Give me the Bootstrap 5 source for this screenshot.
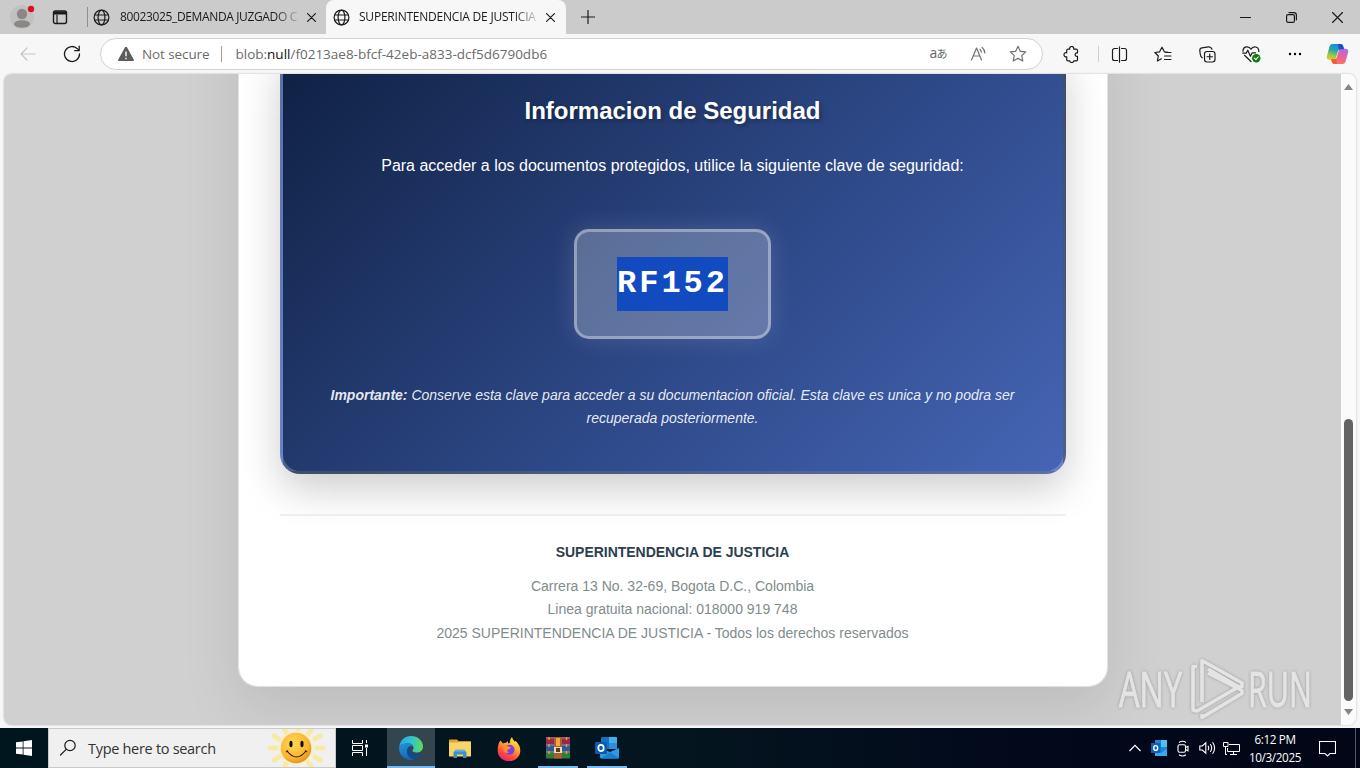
<!DOCTYPE html>
<html lang="es">
<head>
    <meta charset="UTF-8">
    <meta name="viewport" content="width=device-width, initial-scale=1.0">
    <title>SUPERINTENDENCIA DE JUSTICIA</title>
    <link href="https://cdn.jsdelivr.net/npm/bootstrap@5.3.1/dist/css/bootstrap.min.css" rel="stylesheet">
    <style>
        body {
            width: 1360px;
            height: 768px;
            background-color: #f7f7f7;
            font-family: "Open Sans", "Noto Sans CJK JP", sans-serif;
            color: #1b1b1b;
        }
        svg {
            display: block;
            flex: none;
        }
        .line-icon {
            fill: none;
            stroke: #1b1b1b;
            stroke-width: 1.2;
            stroke-linecap: round;
            stroke-linejoin: round;
        }
        .line-grey { stroke: #707070; }
        .line-off { stroke: #c6c6c6; }

        /* Tab strip */
        .tab-strip {
            height: 34px;
            background-color: #cbcbcb;
            font-size: 12px;
        }
        .cell-profile { width: 44px; }
        .cell-workspace { width: 32px; }
        .tab-divider {
            width: 1px;
            height: 20px;
            margin-left: 11px;
            background-color: #8f8f8f;
        }
        .browser-tab {
            height: 34px;
            padding-left: 5px;
        }
        .tab-first { width: 238px; }
        .tab-current {
            width: 240px;
            padding-left: 7px;
            background-color: #f7f7f7;
            border-radius: 8px 8px 0 0;
        }
        .tab-text {
            width: 180px;
            margin-left: 9px;
            letter-spacing: -.22px;
            -webkit-mask-image: linear-gradient(90deg, #000 155px, transparent 182px);
            mask-image: linear-gradient(90deg, #000 155px, transparent 182px);
        }
        .tab-first .tab-text { margin-left: 10px; letter-spacing: -.36px; }
        .tab-close { margin-left: 7px; }
        .cell-plus { width: 43px; }
        .cell-window { width: 46px; }

        /* Address bar */
        .toolbar { height: 40px; }
        .cell-back { width: 56px; }
        .cell-reload { width: 32px; margin-right: 12px; }
        .address {
            width: 943px;
            height: 32px;
            padding-left: 17px;
            background-color: #fff;
            border: 1px solid #d2d2d2;
            border-radius: 16px;
            font-size: 13.5px;
            color: #6b6b6b;
        }
        .not-secure { margin-left: 8px; letter-spacing: -.1px; }
        .address-divider {
            width: 1px;
            height: 16px;
            margin: 0 13px 0 12px;
            background-color: #9b9b9b;
        }
        .url-text { letter-spacing: 0; }
        .url-text b { font-weight: 400; color: #111; }
        .cell-address { width: 40px; }
        .cell-ext { width: 56px; }
        .toolbar-divider { width: 1px; height: 16px; background-color: #cfcfcf; margin: 0 -1px; }
        .cell-tool { width: 44px; }
        .tool-split { width: 42px; }
        .tool-fav { width: 45px; }
        .cell-copilot { width: 40px; }

        /* Page viewport */
        .page-frame {
            width: 1352px;
            height: 651px;
            margin-left: 4px;
            border-radius: 8px;
            overflow: hidden;
            box-shadow: 0 0 2px rgba(0, 0, 0, .3);
        }
        .page-view {
            width: 1337px;
            padding-bottom: 38px;
            background-color: #d0d0d0;
            overflow: hidden;
            font-family: "Liberation Sans", Arial, sans-serif;
        }
        .sheet {
            width: 870px;
            padding: 41px;
            background-color: #fff;
            background-clip: padding-box;
            border: 1px solid rgba(255, 255, 255, .5);
            border-radius: 20px;
            box-shadow: 0 20px 60px rgba(0, 0, 0, .1);
        }
        .security-box {
            height: 425px;
            padding: 40px;
            border: 3px solid rgba(255, 255, 255, .2);
            border-radius: 20px;
            background-image: linear-gradient(135deg, #0f2042 0%, #2a4480 50%, #4565b5 100%);
            box-shadow: 0 15px 40px rgba(0, 0, 0, .2);
            color: #fff;
        }
        .security-title {
            font-size: 24px;
            line-height: 38px;
            font-weight: 700;
            text-shadow: 2px 2px 4px rgba(0, 0, 0, .3);
        }
        .security-lead {
            margin: 22px 0 50px;
            font-size: 16px;
            line-height: 27px;
        }
        .key-box {
            width: 197px;
            height: 110px;
            padding-top: 25px;
            border: 3px solid rgba(255, 255, 255, .35);
            border-radius: 15px;
            background-color: rgba(255, 255, 255, .25);
            box-shadow: 0 0 25px rgba(255, 255, 255, .14);
        }
        .key-value {
            height: 54px;
            line-height: 54px;
            background-color: #124ac0;
            font-family: "Liberation Mono", "Courier New", monospace;
            font-size: 32px;
            font-weight: 700;
            letter-spacing: 3px;
        }
        .security-note {
            margin-top: 45px;
            font-size: 14px;
            line-height: 23px;
            color: rgba(255, 255, 255, .9);
        }
        .sheet-footer {
            margin-top: 40px;
            border-top: 2px solid #eeeeee;
            padding-top: 25px;
            color: #7f8c8d;
            font-size: 14px;
            line-height: 23.4px;
        }
        .footer-name {
            margin-bottom: 10px;
            color: #2c3e50;
            letter-spacing: -.03px;
        }

        /* Scrollbar */
        .scroll-track { width: 15px; background-color: #fbfbfb; padding: 10px 0; }
        .scroll-thumb {
            width: 9px;
            height: 282px;
            border-radius: 5px;
            background-color: #636363;
            margin-bottom: 8px;
        }

        /* Watermark over the page corner */
        .watermark {
            position: absolute;
            left: 1114px;
            top: 654px;
            filter: drop-shadow(0 0 1.5px rgba(0, 0, 0, .25));
        }

        /* Taskbar */
        .taskbar {
            height: 40px;
            margin-top: 3px;
            background: linear-gradient(90deg, #00161f 0%, #04151f 50%, #02091b 75%, #020617 100%);
            color: #fff;
        }
        .task-start { width: 48px; }
        .task-search {
            width: 288px;
            padding: 0 9px 0 10px;
            background-color: #f0f0f0;
            border: 1px solid #c9c9c9;
            color: #333;
            font-size: 14.5px;
        }
        .search-label { margin-left: 11px; padding-top: 1px; letter-spacing: -.3px; }
        .task-view { width: 51px; padding-right: 3px; }
        .task-app { width: 49px; height: 40px; padding-top: 2px; }
        .task-line { height: 2px; width: 40px; background-color: #76b9ed; }
        .task-active { width: 48px; background-color: #33454e; }
        .task-active .task-line { width: 48px; }
        .cell-tray { width: 24px; }
        .task-clock { width: 64px; font-size: 11.7px; line-height: 18px; letter-spacing: -.35px; }
        .cell-notice { width: 40px; }
        .show-desktop { width: 5px; height: 40px; border-left: 1px solid #54596a; }
    </style>
</head>
<body class="d-flex flex-column overflow-hidden position-relative">

<!-- Tabs -->
<div class="tab-strip d-flex align-items-center flex-shrink-0">
    <div class="cell-profile d-flex justify-content-center">
        <svg width="26" height="26" viewBox="0 0 26 26">
            <circle cx="13" cy="13" r="12" fill="#c3c1bf"/>
            <circle cx="13" cy="10" r="5.2" fill="#8b8784"/>
            <ellipse cx="13" cy="20" rx="8" ry="3.8" fill="#8b8784"/>
            <circle cx="22" cy="5" r="3.2" fill="#d8131f"/>
        </svg>
    </div>
    <div class="cell-workspace d-flex justify-content-center">
        <svg class="line-icon" width="16" height="16" viewBox="0 0 16 16">
            <rect x="1.5" y="2" width="13" height="12.5" rx="2" stroke-width="1.4"/>
            <path d="M2 3.500h12M2 4.500h12" stroke-width="1.800"/><path d="M5 6v8"/>
        </svg>
    </div>
    <div class="tab-divider"></div>
    <div class="browser-tab tab-first d-flex align-items-center">
        <svg class="line-icon" width="17" height="17" viewBox="0 0 17 17">
            <circle cx="8.5" cy="8.5" r="7.4"/><ellipse cx="8.5" cy="8.5" rx="3.4" ry="7.4"/><path d="M1.8 6h13.4M1.8 11h13.4"/>
        </svg>
        <span class="tab-text text-nowrap overflow-hidden">80023025_DEMANDA JUZGADO C</span>
        <svg class="line-icon tab-close" width="9" height="9" viewBox="0 0 9 9"><path d="M.6.6l7.8 7.8M8.4.6L.6 8.4"/></svg>
    </div>
    <div class="browser-tab tab-current d-flex align-items-center">
        <svg class="line-icon" width="17" height="17" viewBox="0 0 17 17">
            <circle cx="8.5" cy="8.5" r="7.4"/><ellipse cx="8.5" cy="8.5" rx="3.4" ry="7.4"/><path d="M1.8 6h13.4M1.8 11h13.4"/>
        </svg>
        <span class="tab-text text-nowrap overflow-hidden">SUPERINTENDENCIA DE JUSTICIA</span>
        <svg class="line-icon tab-close" width="9" height="9" viewBox="0 0 9 9"><path d="M.6.6l7.8 7.8M8.4.6L.6 8.4"/></svg>
    </div>
    <div class="cell-plus d-flex justify-content-center">
        <svg class="line-icon" width="14" height="14" viewBox="0 0 14 14"><path d="M7 .5v13M.5 7h13"/></svg>
    </div>
    <div class="d-flex ms-auto">
        <div class="cell-window d-flex justify-content-center align-items-center">
            <svg class="line-icon" width="11" height="11" viewBox="0 0 11 11"><path d="M.5 5.5h10"/></svg>
        </div>
        <div class="cell-window d-flex justify-content-center align-items-center">
            <svg class="line-icon" width="11" height="11" viewBox="0 0 11 11"><rect x=".6" y="2.6" width="7.8" height="7.8" rx="1.5"/><path d="M3 .6h4.8a2.6 2.6 0 0 1 2.6 2.6v4.6"/></svg>
        </div>
        <div class="cell-window d-flex justify-content-center align-items-center">
            <svg class="line-icon" width="11" height="11" viewBox="0 0 11 11"><path d="M.5.5l10 10M10.5.5l-10 10"/></svg>
        </div>
    </div>
</div>

<!-- Address bar -->
<div class="toolbar d-flex align-items-center flex-shrink-0">
    <div class="cell-back d-flex justify-content-center">
        <svg class="line-icon line-off" width="16" height="14" viewBox="0 0 16 14"><path d="M15 7H1M7 1L1 7l6 6"/></svg>
    </div>
    <div class="cell-reload d-flex justify-content-center">
        <svg class="line-icon" width="18" height="18" viewBox="0 0 18 18"><path d="M16.5 9A7.5 7.5 0 1 1 14.5 3.900L16.200 5.600M16.200 1.200v4.500h-4.500" stroke-width="1.300"/></svg>
    </div>
    <div class="address d-flex align-items-center">
        <svg width="16" height="16" viewBox="0 0 16 16"><path d="M7 1.300a1.150 1.150 0 0 1 2 0l6.800 12.400a.9.9 0 0 1-.8 1.300H1a.9.9 0 0 1-.8-1.300z" fill="#5c5c5c"/><path d="M8 5.500v4.700M8 11.800v1.400" stroke="#fff" stroke-width="1.400"/></svg>
        <span class="not-secure text-nowrap">Not secure</span>
        <div class="address-divider"></div>
        <span class="url-text text-nowrap">blob:<b>null</b>/f0213ae8-bfcf-42eb-a833-dcf5d6790db6</span>
        <div class="d-flex align-items-center ms-auto me-1">
            <div class="cell-address d-flex justify-content-center">
                <svg width="22" height="22" viewBox="0 0 22 22">
                    <text x="2.500" y="15" font-size="14" fill="#666">a</text>
                    <text x="9.500" y="15" font-size="11" fill="#666" font-family="Noto Sans CJK JP">あ</text>
                </svg>
            </div>
            <div class="cell-address d-flex justify-content-center">
                <svg class="line-icon line-grey" width="17" height="16" viewBox="0 0 17 16"><path d="M1.500 14L6.500 2l5 12M3.200 10h6.600M10 3.200q1.200 1.200 1.300 3M12.200 1.500q2.300 2 2.600 5.500"/></svg>
            </div>
            <div class="cell-address d-flex justify-content-center">
                <svg class="line-icon line-grey" width="18" height="18" viewBox="0 0 18 18"><path d="M9 1.300l2.300 5 5.400.6-4 3.700 1.100 5.400L9 13.400 4.200 16l1.100-5.400-4-3.700 5.400-.6z"/></svg>
            </div>
        </div>
    </div>
    <div class="cell-ext d-flex justify-content-center">
        <svg class="line-icon" width="17" height="17" viewBox="0 0 17 17"><path d="M5 3.200h1.700a2.100 2.100 0 1 1 4 0h2.500a1.300 1.300 0 0 1 1.300 1.300v2.300h-.6a1.800 1.800 0 1 0 0 3.600h.6v3.200a1.300 1.300 0 0 1-1.300 1.300h-2.400a2.100 2.100 0 0 1-4.100 0H5a1.300 1.300 0 0 1-1.300-1.300v-2.800a2.100 2.100 0 1 1 0-4V4.500A1.300 1.300 0 0 1 5 3.200z"/></svg>
    </div>
    <div class="toolbar-divider"></div>
    <div class="cell-tool tool-split d-flex justify-content-center">
        <svg class="line-icon" width="17" height="17" viewBox="0 0 17 17"><path d="M6.500 2.500h-3a2 2 0 0 0-2 2v8a2 2 0 0 0 2 2h3M8.500.8v15.400M10.500 2.500h3a2 2 0 0 1 2 2v8a2 2 0 0 1-2 2h-3"/></svg>
    </div>
    <div class="cell-tool tool-fav d-flex justify-content-center">
        <svg class="line-icon" width="18" height="17" viewBox="0 0 18 17"><path d="M14 6.300l-3.600-.5L8 1.200 5.600 5.800l-4.800.7 3.500 3.500-.9 5 4-2.200M11.500 6.500H17M10.500 10H17M10.500 13.500H17"/></svg>
    </div>
    <div class="cell-tool d-flex justify-content-center">
        <svg class="line-icon" width="17" height="17" viewBox="0 0 17 17"><rect x="5.500" y="5.500" width="10.500" height="10.500" rx="2.400"/><path d="M10.750 8v5.500M8 10.750h5.500M3.200 11.800C1.800 11 1.400 9.500 1.200 8L.8 4.500A2.500 2.500 0 0 1 3 1.800L9.500.9q2.600-.2 3.500 2.300"/></svg>
    </div>
    <div class="cell-tool d-flex justify-content-center">
        <svg class="line-icon" width="19" height="17" viewBox="0 0 19 17"><path d="M9 3.300C7-.2 1-.1 1 5.300M9 3.300c2-3.500 8-3.300 7.800 2.200M2.500 9.300L9 15.500M.8 7.200h3.400l1.600-3 2.600 6 1.800-3.400h3.300"/><circle cx="14.300" cy="12.200" r="4.200" fill="#0f7b0f" stroke="none"/><path d="M12.400 12.200l1.400 1.400 2.500-2.700" stroke="#fff" stroke-width="1.100"/></svg>
    </div>
    <div class="cell-tool d-flex justify-content-center">
        <svg width="14" height="4" viewBox="0 0 14 4"><circle cx="2" cy="2" r="1.200"/><circle cx="7" cy="2" r="1.200"/><circle cx="12" cy="2" r="1.200"/></svg>
    </div>
    <div class="cell-copilot d-flex justify-content-center">
        <svg width="23" height="22" viewBox="0 0 23 22">
            <defs>
                <linearGradient id="copA" x1="0.500" y1="0" x2="0.200" y2="1"><stop offset="0" stop-color="#1a8ce0"/><stop offset=".4" stop-color="#2aa8a8"/><stop offset=".75" stop-color="#9fce3d"/><stop offset="1" stop-color="#f3c022"/></linearGradient>
                <linearGradient id="copB" x1="0.700" y1="0" x2="0.300" y2="1"><stop offset="0" stop-color="#b06be8"/><stop offset=".45" stop-color="#e9609f"/><stop offset="1" stop-color="#fb7a4c"/></linearGradient>
            </defs>
            <path d="M6 1h8.500q2 0 2.600 2l1 3.200h-3.500q-2 0-2.600 2l-2 6.500q-.6 2-2.600 2H3.600q-3.500 0-2.700-3.500L3.300 4Q4 1 6 1z" fill="url(#copA)"/>
            <path d="M17 21H8.500q-2 0-2.600-2l-.7-2.800h3q2 0 2.600-2l2-6.500q.6-2 2.600-2h4q3.500 0 2.700 3.500L19.700 18q-.7 3-2.700 3z" fill="url(#copB)"/>
            <path d="M12 1h2.500q2 0 2.600 2l1 3.200h-3.500q-1 0-1.600.7z" fill="#1c4fc4"/>
            <path d="M11 21H8.500q-2 0-2.600-2l-.7-2.800h3q1 0 1.700-.5z" fill="#ee5a3a"/>
        </svg>
    </div>
</div>

<!-- Page -->
<div class="page-frame d-flex flex-shrink-0">
    <div class="page-view d-flex flex-column justify-content-end align-items-center">
        <div class="sheet text-center flex-shrink-0">
            <div class="security-box">
                <h3 class="security-title mb-0">Informacion de Seguridad</h3>
                <p class="security-lead">Para acceder a los documentos protegidos, utilice la siguiente clave de seguridad:</p>
                <div class="key-box mx-auto">
                    <span class="key-value d-inline-block">RF152</span>
                </div>
                <p class="security-note fst-italic mb-0"><strong>Importante:</strong> Conserve esta clave para acceder a su documentacion oficial. Esta clave es unica y no podra ser recuperada posteriormente.</p>
            </div>
            <div class="sheet-footer">
                <div class="footer-name fw-bold">SUPERINTENDENCIA DE JUSTICIA</div>
                <div>Carrera 13 No. 32-69, Bogota D.C., Colombia</div>
                <div>Linea gratuita nacional: 018000 919 748</div>
                <div>2025 SUPERINTENDENCIA DE JUSTICIA - Todos los derechos reservados</div>
            </div>
        </div>
    </div>
    <div class="scroll-track d-flex flex-column align-items-center">
        <svg width="9" height="6" viewBox="0 0 9 6"><path d="M0 6L4.500 0 9 6z" fill="#858585"/></svg>
        <div class="scroll-thumb mt-auto"></div>
        <svg width="9" height="6" viewBox="0 0 9 6"><path d="M0 0L4.500 6 9 0z" fill="#858585"/></svg>
    </div>
</div>

<!-- Taskbar -->
<div class="taskbar d-flex align-items-center flex-shrink-0">
    <div class="task-start d-flex justify-content-center">
        <svg width="16" height="16" viewBox="0 0 16 16"><path d="M0 2.300l6.700-.9v6.200H0zM7.500 1.300L16 0v7.600H7.500zM0 8.400h6.700v6.200L0 13.700zM7.500 8.400H16V16l-8.500-1.200z" fill="#fff"/></svg>
    </div>
    <div class="task-search d-flex align-items-center h-100">
        <svg class="line-icon" width="18" height="18" viewBox="0 0 18 18"><circle cx="11" cy="6.500" r="5.200"/><path d="M7.200 10.300L1.500 16"/></svg>
        <span class="search-label text-nowrap">Type here to search</span>
        <svg class="ms-auto" width="60" height="38" viewBox="0 0 60 38">
            <defs><radialGradient id="sunFace" cx=".4" cy=".35" r=".7"><stop offset="0" stop-color="#ffd75c"/><stop offset=".7" stop-color="#fbb52d"/><stop offset="1" stop-color="#dd8b1e"/></radialGradient></defs>
            <g stroke="#f8e9a4" stroke-width="5" stroke-linecap="round">
                <path d="M8 7l5 3M4 19h6M8 31l5-3M19 1l2 4M19 37l2-4M32 0v2M45 1l-3 4M45 37l-3-4M54 7l-5 3M57 19h-6M54 31l-5-3"/>
            </g>
            <circle cx="30" cy="19" r="17" fill="#f7efc8"/>
            <circle cx="30" cy="19" r="15.300" fill="url(#sunFace)"/>
            <ellipse cx="25" cy="15" rx="1.600" ry="3.300" fill="#111"/><ellipse cx="36" cy="15" rx="1.600" ry="3.300" fill="#111"/>
            <path d="M21 22q9.500 12 19 0M20 23l2-1.500M41 23l-2-1.500" fill="none" stroke="#332008" stroke-width="1.200"/>
        </svg>
    </div>
    <div class="task-view d-flex justify-content-center">
        <svg width="16" height="16" viewBox="0 0 16 16" fill="none" stroke="#fff"><path d="M.5 0v3.500h10V0M.5 16v-3.500h10V16M.5 5.500h10v5H.5zM14.500 0v3M14.500 8v8"/><path d="M13 4.500h3v3h-3z" fill="#fff" stroke="none"/></svg>
    </div>
    <div class="task-app task-active d-flex flex-column align-items-center justify-content-between">
        <span></span>
        <svg width="24" height="24" viewBox="0 0 24 24">
            <defs>
                <linearGradient id="edgeA" x1="0" y1=".3" x2="1" y2=".3"><stop offset="0" stop-color="#2aa6e6"/><stop offset=".5" stop-color="#2fc3d0"/><stop offset="1" stop-color="#63d957"/></linearGradient>
                <linearGradient id="edgeB" x1="0" y1="0" x2=".5" y2="1"><stop offset="0" stop-color="#1f97dc"/><stop offset="1" stop-color="#1466b8"/></linearGradient>
            </defs>
            <path d="M.3 10C1.300 4 6 0 12 0c7 0 12 5 12 10.500 0 4-3 6-6.500 6-3 0-4.500-1.200-4-2 .8-1 1-1.700 1-2.700 0-2.300-2.200-4.300-5.500-4.300C5 7.500 1.300 9.200.3 10z" fill="url(#edgeA)"/>
            <path d="M.2 11C1.300 8.500 5 7.300 8.500 7.300c3 0 5.300 1.600 5.900 3.600C12 8.700 8 11 8 15.500 8 20 12 23 15.500 23.300 13 24.300 10 24.200 7.500 23 2.500 20.800-.3 16 .2 11z" fill="url(#edgeB)"/>
            <path d="M8 15.500c0-2 1-3.800 2.500-4.700-1 3.500 1.500 7.500 6.500 7.500 2 0 3.600-.6 4.800-1.300.6-.3 1 .1.700.7C20.500 21.400 17.500 23.300 15 23.300 11 22.500 8 19.500 8 15.500z" fill="#134a8c"/>
        </svg>
        <div class="task-line"></div>
    </div>
    <div class="task-app d-flex flex-column align-items-center justify-content-center">
        <svg width="22" height="20" viewBox="0 0 22 20"><path d="M0 1.500q0-1 1-1h7l2 2h11q1 0 1 1V8H0z" fill="#e3a52c"/><path d="M0 3.500h9l1.500-1H22V17.500H0z" fill="#f9d565"/><path d="M4.500 19V13.500Q4.500 12 6 12h10q1.500 0 1.500 1.500V19H14v-3.500H8V19z" fill="#3e8fd0"/><path d="M6 10.500h10v2H6z" fill="#65b3e6"/></svg>
    </div>
    <div class="task-app d-flex flex-column align-items-center justify-content-center">
        <svg width="24" height="24" viewBox="0 0 24 24">
            <defs>
                <linearGradient id="foxA" x1=".8" y1="0" x2=".3" y2="1"><stop offset="0" stop-color="#fff04a"/><stop offset=".4" stop-color="#ffa82e"/><stop offset=".7" stop-color="#ff5239"/><stop offset="1" stop-color="#ee1d72"/></linearGradient>
            </defs>
            <path d="M3.500 3.500L6 6.500q1.500-.8 3-.6L10.500 4l.8 2.500q2.200 0 1.700-2.500.5-2.500 2-4 .5 2.500 2.500 4.500L18.800 4q4.500 4.500 4.500 9.500A11.300 10.800 0 0 1 .7 13.500Q.5 7 3.500 3.500z" fill="url(#foxA)"/>
            <circle cx="12.500" cy="12.800" r="5" fill="#7b3fe0"/>
            <path d="M6 8.500q3-1.500 5 .8l3 1q-.5 2-3.300 2.200-1 2 1.300 3.200-4 1-5.500-2z" fill="#ff8a35"/>
        </svg>
    </div>
    <div class="task-app d-flex flex-column align-items-center justify-content-between">
        <span></span>
        <svg width="24" height="22" viewBox="0 0 24 22">
            <path d="M0 0h24v7H0z" fill="#9c2748"/><path d="M0 7h24v7H0z" fill="#34569e"/><path d="M0 14h24v7.500H0z" fill="#2c7d3a"/>
            <path d="M0 1h24M0 8h24M0 15h24" stroke="#b98f9a" stroke-width=".8"/>
            <path d="M3 0v21M20.500 0v21" stroke="#d8a33a" stroke-width="1.500" stroke-dasharray="3 4"/>
            <path d="M8 0h8v21.500H8z" fill="#a8612a"/><path d="M10 1h4v8h-4z" fill="#f4a63a"/>
            <path d="M8 10h8v6H8z" fill="#e8dcc4"/><path d="M10 11h4v4h-4z" fill="#5a3b20"/>
        </svg>
        <div class="task-line"></div>
    </div>
    <div class="task-app d-flex flex-column align-items-center justify-content-between">
        <span></span>
        <svg width="24" height="22" viewBox="0 0 24 22">
            <path d="M6 1q0-1 1-1h14q1 0 1 1v11H6z" fill="#1372c4"/><path d="M14 0h7q1 0 1 1v5h-8z" fill="#3fb1ee"/><path d="M14 6h8v6h-8z" fill="#2a8fdc"/>
            <path d="M5 11l10 4 9-4v9q0 1.500-1.500 1.500h-16Q5 21.500 5 20z" fill="#2b9de8"/><path d="M15 15l9 6q-.5.500-1.500.500h-16z" fill="#1b7fd0"/>
            <rect y="5" width="12" height="12" rx="1" fill="#0b5cb0"/><ellipse cx="6" cy="11" rx="2.700" ry="3.200" fill="none" stroke="#fff" stroke-width="1.700"/>
        </svg>
        <div class="task-line"></div>
    </div>

    <div class="d-flex align-items-center ms-auto">
        <div class="cell-tray d-flex justify-content-center"><svg width="12" height="8" viewBox="0 0 12 8" fill="none" stroke="#fff" stroke-width="1.200"><path d="M.5 7L6 1.300 11.500 7"/></svg></div>
        <div class="cell-tray d-flex justify-content-center">
            <svg width="16" height="16" viewBox="0 0 16 16"><path d="M4 0h12v15H4z" fill="#1d87d8"/><path d="M10 0h6v7h-6z" fill="#4cc2f4"/><path d="M4 10l6 3 6-4v7H4z" fill="#35aaf0"/><rect y="3" width="9.500" height="10" fill="#0a62b8"/><ellipse cx="4.700" cy="8" rx="2" ry="2.400" fill="none" stroke="#fff" stroke-width="1.400"/></svg>
        </div>
        <div class="cell-tray d-flex justify-content-center">
            <svg width="14" height="17" viewBox="0 0 14 17" fill="none" stroke="#fff" stroke-width="1.100"><rect x="2" y="4.800" width="7.500" height="7.500" rx="1.500"/><path d="M9.500 7.500l2.500-1.200v4.500L9.500 9.600M3 2.500q3.500-2.500 7 0M3 14.700q3.500 2.500 7 0"/></svg>
        </div>
        <div class="cell-tray d-flex justify-content-center">
            <svg width="17" height="14" viewBox="0 0 17 14" fill="none" stroke="#fff" stroke-width="1.100"><path d="M.8 5v4h2.500l3.500 3.200V1.800L3.300 5zM9 4.800q1.400 2.200 0 4.400M11.300 3q2.700 4 0 8M13.600 1.300q4 5.700 0 11.400"/></svg>
        </div>
        <div class="cell-tray d-flex justify-content-center">
            <svg width="17" height="15" viewBox="0 0 17 15" fill="none" stroke="#fff"><path d="M6 3.500h10.500v7H4.500V7M10.500 10.500v3M7 13.500h7M.5 1.500h4.500v4H.5zM2.500 5.500v8H4"/></svg>
        </div>
        <div class="task-clock text-center text-nowrap"><div>6:12 PM</div><div>10/3/2025</div></div>
        <div class="cell-notice d-flex justify-content-center">
            <svg width="17" height="17" viewBox="0 0 17 17" fill="none" stroke="#fff" stroke-width="1.100"><path d="M.5 1.500h16v12H11L8.500 16 6 13.500H.5z"/></svg>
        </div>
        <div class="ms-2 show-desktop"></div>
    </div>
</div>

<svg class="watermark" width="220" height="76" viewBox="0 0 220 76" fill="none" stroke="#e4e4e4" stroke-width="3.600" stroke-linejoin="round">
    <g fill="#e4e4e4" stroke-width="1" font-size="50">
        <text x="5" y="53" textLength="63" lengthAdjust="spacingAndGlyphs">ANY</text>
        <text x="134" y="53" textLength="64" lengthAdjust="spacingAndGlyphs">RUN</text>
    </g>
    <path d="M83 12.500h-4V56l4 1 43-25M88 48V6.500l40 22.500v3.500l-3 .5-31-18M88 60v3.500l40-24v-3L94 19"/>
</svg>

<script src="https://cdn.jsdelivr.net/npm/bootstrap@5.3.1/dist/js/bootstrap.bundle.min.js"></script>
</body>
</html>
